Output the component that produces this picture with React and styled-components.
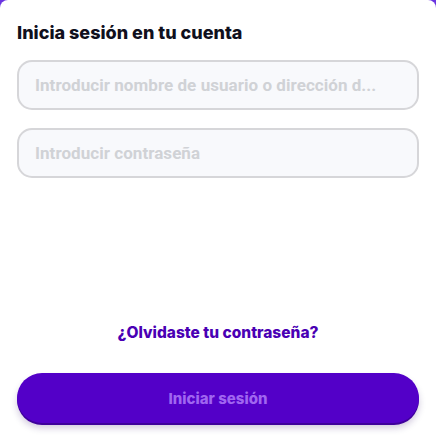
import styled, { createGlobalStyle } from "styled-components";

const GlobalStyle = createGlobalStyle`
  html, body {
    margin: 0;
    padding: 0;
    background: #6a35e0;
  }
  * { box-sizing: border-box; }
`;

const Card = styled.div`
  width: 436px;
  height: 437px;
  background: #fff;
  border-radius: 8px 8px 0 0;
  padding: 22px 17px 0 17px;
  display: flex;
  flex-direction: column;
  font-family: Inter, "Noto Sans", sans-serif;
`;

const Title = styled.h1`
  margin: 0;
  font-size: 18px;
  font-weight: 800;
  line-height: 21px;
  color: #10101d;
`;

const Fields = styled.div`
  display: flex;
  flex-direction: column;
  gap: 18px;
  margin-top: 17px;
`;

const Input = styled.input`
  width: 100%;
  height: 50px;
  border: 2px solid #d6d6d9;
  border-radius: 15px;
  background: #f8f9fc;
  padding: 0 16px;
  font-family: Roboto, "Liberation Sans", Arial, sans-serif;
  font-size: 17px;
  font-weight: 700;
  letter-spacing: 0.05px;
  color: #333;
  outline: none;

  &::placeholder {
    color: #d0d2d6;
  }
`;

const ForgotLink = styled.a`
  margin-top: 145px;
  align-self: center;
  font-size: 15.5px;
  font-weight: 800;
  color: #4a00b4;
  text-decoration: none;
  line-height: 20px;
  cursor: pointer;
`;

const SubmitButton = styled.button`
  margin-top: 30px;
  width: 100%;
  height: 50px;
  border: none;
  border-radius: 25px;
  background: #5300c8;
  color: #a066f0;
  font-family: Inter, "Noto Sans", sans-serif;
  font-size: 15px;
  font-weight: 800;
  box-shadow: 0 5px 7px rgba(40, 0, 100, 0.22), 0 2px 0 #4400a8;
  cursor: pointer;
`;

export default function App() {
  return (
    <>
      <GlobalStyle />
      <Card>
        <Title>Inicia sesión en tu cuenta</Title>
        <Fields>
          <Input placeholder="Introducir nombre de usuario o dirección d..." />
          <Input type="password" placeholder="Introducir contraseña" />
        </Fields>
        <ForgotLink>¿Olvidaste tu contraseña?</ForgotLink>
        <SubmitButton>Iniciar sesión</SubmitButton>
      </Card>
    </>
  );
}
